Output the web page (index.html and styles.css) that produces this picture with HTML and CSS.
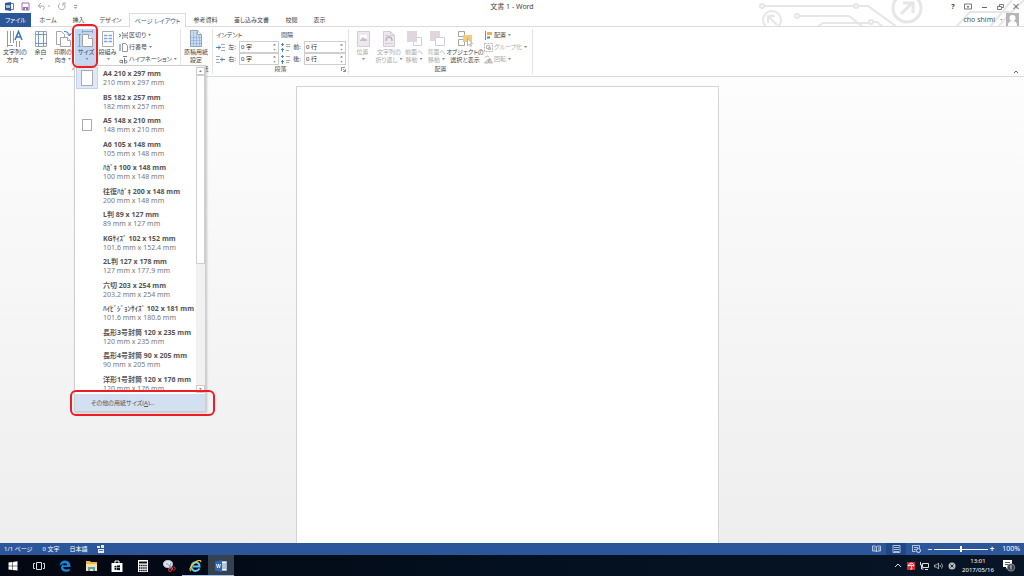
FILE: index.html
```html
<!DOCTYPE html>
<html lang="ja">
<head>
<meta charset="utf-8">
<title>文書 1 - Word</title>
<link rel="stylesheet" href="styles.css">
</head>
<body>
<div class="app">
  <header class="top">
    <svg class="circuit" width="280" height="27" viewBox="0 0 280 27" fill="none" stroke="#e6e6e6" stroke-width="2">
      <circle cx="18" cy="6" r="2"/><path d="M20 6h90"/><circle cx="112" cy="6" r="2"/><path d="M114 6h10l29 21"/>
      <circle cx="53" cy="16" r="2"/><path d="M55 16h50l14 11M73 27l6-4h46"/><circle cx="127" cy="22" r="2"/><path d="M129 22h4l6 5"/>
      <circle cx="28" cy="20" r="9"/><path d="M33 25l-8-8M24 23v-7h7"/>
      <circle cx="163" cy="8" r="14" stroke-width="3"/><path d="M157 14l12-12M159 3h10v10" stroke-width="3"/>
      <path d="M212 27l14-15h42l12-12M246 27l22-27M254 27l20-22"/>
    </svg>
    <div class="titlebar">
      <div class="quick">
        <button aria-label="Word"><svg width="9" height="9" viewBox="0 0 9 9"><path d="M5 1.500h3.500v6H5z" fill="#fff" stroke="#5d80b5"/><path d="M0 1l6-1v9l-6-1z" fill="#2b579a"/><path d="M1 3l1 3 1-3 1 3 1-3" stroke="#fff" fill="none" stroke-width=".7"/></svg></button>
        <button aria-label="保存"><svg width="9" height="9" viewBox="0 0 9 9"><path d="M1 1h7v7H1z" fill="#fff" stroke="#9a6fb8"/><path d="M2 5h5v3H2z" fill="#9a6fb8"/><path d="M4 6h1v2H4z" fill="#fff"/></svg></button>
        <button aria-label="元に戻す"><svg width="13" height="9" viewBox="0 0 13 9" fill="none" stroke="#aaa"><path d="M4 1L1 4l3 2M1 4h5q3 1 0 4"/><path d="M11 4h2"/></svg></button>
        <button aria-label="やり直し"><svg width="9" height="9" viewBox="0 0 9 9" fill="none" stroke="#aaa"><path d="M3 1.500a3.300 3.300 0 1 0 3.500 0M6 4V1h3"/></svg></button>
        <button aria-label="カスタマイズ"><svg width="5" height="6" viewBox="0 0 5 6"><path d="M1 1h3v1H1zM1 3h3L2.500 5z" fill="#999"/></svg></button>
      </div>
      <h1 class="doc-title">文書 1 - Word</h1>
      <div class="window-buttons">
        <button class="help">?</button>
        <button aria-label="リボンの表示"><svg width="8" height="7" viewBox="0 0 8 7" fill="none" stroke="#777"><path d="M.5 1h7v5h-7zM4 5V3M3 3.500h2"/></svg></button>
        <button aria-label="最小化"><svg width="8" height="7" viewBox="0 0 8 7"><path d="M2 4h5v1H2z" fill="#666"/></svg></button>
        <button aria-label="元のサイズ"><svg width="8" height="7" viewBox="0 0 8 7" fill="none" stroke="#777"><path d="M1.500 3.500h4v3h-4zM3.500 3V1.500h4v3H6"/></svg></button>
        <button aria-label="閉じる"><svg width="8" height="7" viewBox="0 0 8 7" stroke="#555"><path d="M1.500 1l5 5M6.500 1l-5 5"/></svg></button>
      </div>
    </div>
    <div class="tab-row">
      <nav class="tabs">
        <button class="tab file">ファイル</button><button class="tab home">ホーム</button><button class="tab insert">挿入</button><button class="tab design">デザイン</button><button class="tab layout">ページ レイアウト</button><button class="tab refs">参考資料</button><button class="tab mail">差し込み文書</button><button class="tab review">校閲</button><button class="tab view">表示</button>
      </nav>
      <button class="account">cho shimi <i class="caret"></i>
        <svg width="13" height="13" viewBox="0 0 13 13"><path d="M0 0h13v13H0z" fill="#b5b5b5"/><circle cx="6.500" cy="5" r="3" fill="#fff"/><path d="M2 13v-2q1-3 4.500-3t4.500 3v2z" fill="#fff"/></svg>
      </button>
    </div>
  </header>

  <section class="ribbon">
    <div class="group setup">
      <div class="group-body">
        <button class="big w30"><svg width="18" height="18" viewBox="0 0 18 18" fill="none" stroke="#9a9a9a"><path d="M1.500 1v16M4.500 1v12M7.500 1v12M10.500 11v6M13.500 11v6M1 15.500h6"/><path d="M9 10l3.500-8.500L16 10M10.500 7h4" stroke="#3a78b8" stroke-width="1.500"/></svg><span>文字列の<br>方向<i class="caret"></i></span></button>
        <button class="big w21"><svg width="14" height="18" viewBox="0 0 14 18" fill="none"><path d="M1.500 1.500h11v15h-11z" stroke="#a5a5a5"/><path d="M1 4.500h12M1 13.500h12M4.500 1v16M9.500 1v16" stroke="#6d9bcb"/></svg><span>余白<br><i class="caret"></i></span></button>
        <button class="big w24"><svg width="17" height="18" viewBox="0 0 17 18" fill="#fff" stroke="#a5a5a5"><path d="M1.500 1.500h5l3 3v10h-8z"/><path d="M5.500 7.500h7l3 3v6h-10z"/><path d="M12.500 7.500v3h3"/><path d="M9 1.500q5 0 5.500 4M12 3.500l2.500 2.500 2-3" stroke="#3a78b8" fill="none"/></svg><span>印刷の<br>向き<i class="caret"></i></span></button>
        <button class="big w22 active"><svg width="16" height="18" viewBox="0 0 16 18" fill="#fff" stroke="#a0a0a0"><path d="M4.500 4.500h6l4 4v8h-10z"/><path d="M10.500 4.500v4h4"/><path d="M4 1.500h11M1.500 4v13M4.500 0v3M14.500 0v3M0 4.500h3M0 16.500h3" stroke="#7897c2" stroke-width=".8"/></svg><span>サイズ<br><i class="caret"></i></span></button>
        <button class="big w21"><svg width="14" height="18" viewBox="0 0 14 18"><path d="M1.500 1.500h11v15h-11z" fill="#fff" stroke="#aaa"/><path d="M3 5.500h3.500M3 8.500h3.500M3 11.500h3.500M7.500 5.500H11M7.500 8.500H11M7.500 11.500H11" stroke="#79a8d8" stroke-width="1.500"/></svg><span>段組み<br><i class="caret"></i></span></button>
        <div class="small-col">
          <button><svg width="9" height="9" viewBox="0 0 9 9" fill="none" stroke="#999"><path d="M3.500 1v2h5V1M3.500 8V6h5v2M3 4.500h6"/><path d="M0 3l2 1.500L0 6" stroke="#3a78b8"/></svg>区切り<i class="caret"></i></button>
          <button><svg width="9" height="9" viewBox="0 0 9 9" fill="none" stroke="#999"><path d="M3.500.5h3l2 2v6h-5z"/><path d="M1 1v7" stroke="#3a78b8"/></svg>行番号<i class="caret"></i></button>
          <button class="hyphen"><svg width="9" height="9" viewBox="0 0 9 9" fill="none" stroke="#777" stroke-width=".9"><circle cx="2" cy="6.500" r="1.300"/><path d="M3.500 5v3.500M5.500 3v5.500"/><circle cx="6.800" cy="6.800" r="1.300"/><path d="M4 1.500h4" stroke="#3a78b8"/></svg>ハイフネーション<i class="caret"></i></button>
        </div>
      </div>
      <div class="group-name">ページ設定</div>
    </div>
    <div class="group manuscript">
      <div class="group-body">
        <button class="big w30"><svg width="16" height="18" viewBox="0 0 16 18"><path d="M2.500.5h7l4 4v12h-11z" fill="#c9dcf0" stroke="#93a5ba"/><path d="M3 7.500h10M3 10.500h10M3 13.500h10M5.500 2v14M8.500 2v14M11.500 5v11" stroke="#8fb0d6" stroke-width=".7"/><path d="M9.500.5v4h4" fill="#fff" stroke="#93a5ba"/></svg><span>原稿用紙<br>設定</span></button>
      </div>
      <div class="group-name">原稿用紙</div>
    </div>
    <div class="group paragraph">
      <div class="group-body fields">
        <fieldset class="indent"><legend>インデント</legend>
          <div class="field"><svg width="9" height="9" viewBox="0 0 9 9" fill="none"><path d="M5 1.500h4M6 4.500h3M5 7.500h4" stroke="#aaa"/><path d="M0 4.500h5M3 2.500v4" stroke="#4a86c4"/></svg><label for="left">左:</label><div class="spin"><input id="left" value="0 字"><span class="arrows"><button aria-label="増やす"></button><button class="down" aria-label="減らす"></button></span></div></div>
          <div class="field"><svg width="9" height="9" viewBox="0 0 9 9" fill="none"><path d="M0 1.500h4M0 4.500h3M0 7.500h4" stroke="#aaa"/><path d="M4 4.500h5M6 2.500v4" stroke="#4a86c4"/></svg><label for="right">右:</label><div class="spin"><input id="right" value="0 字"><span class="arrows"><button aria-label="増やす"></button><button class="down" aria-label="減らす"></button></span></div></div>
        </fieldset>
        <fieldset class="spacing"><legend>間隔</legend>
          <div class="field"><svg width="9" height="9" viewBox="0 0 9 9" fill="none"><path d="M5 1.500h4M5 3.500h4M5 7.500h3" stroke="#aaa"/><path d="M1.500 0v3M0 1.500h3M1.500 5v4M0 6.500h3" stroke="#4a86c4"/></svg><label for="before">前:</label><div class="spin"><input id="before" value="0 行"><span class="arrows"><button aria-label="増やす"></button><button class="down" aria-label="減らす"></button></span></div></div>
          <div class="field"><svg width="9" height="9" viewBox="0 0 9 9" fill="none"><path d="M5 1.500h4M5 5.500h4M5 7.500h3" stroke="#aaa"/><path d="M1.500 0v3M0 1.500h3M1.500 5v4M0 6.500h3" stroke="#4a86c4"/></svg><label for="after">後:</label><div class="spin"><input id="after" value="0 行"><span class="arrows"><button aria-label="増やす"></button><button class="down" aria-label="減らす"></button></span></div></div>
        </fieldset>
      </div>
      <div class="group-name">段落<svg class="launcher" width="5" height="5" viewBox="0 0 5 5" fill="none" stroke="#777"><path d="M.5 4V.5H4M2 2l2.500 2.500M4.500 2v2.500H2" stroke-width=".8"/></svg></div>
    </div>
    <div class="group arrange">
      <div class="group-body">
        <button class="big w27" disabled><svg width="14" height="18" viewBox="0 0 14 18"><path d="M1.500 1.500h12v15h-12z" fill="#eee8ee" stroke="#d4cdd4"/><path d="M4 5h7v6H4z" fill="#fff"/><path d="M4 10l3-3 2 2 1-1 1 2v1H4z" fill="#c4c0c4"/></svg><span>位置<br><i class="caret"></i></span></button>
        <button class="big w26" disabled><svg width="14" height="18" viewBox="0 0 14 18" fill="none"><path d="M1.500 1.500h7l4 4v11h-11z" fill="#eee8ee" stroke="#d4cdd4"/><path d="M8.500 1.500v4h4M3 5.500h4M3 13.500h8" stroke="#d4cdd4"/><path d="M4 11q0-4 3-4t3 4" stroke="#b8b3b8" stroke-width="1.500"/></svg><span>文字列の<br>折り返し<i class="caret"></i></span></button>
        <button class="big w24" disabled><svg width="16" height="18" viewBox="0 0 16 18"><path d="M7.500 7.500h8v8h-8z" fill="#fff" stroke="#d4cdd4"/><path d="M1 1h10v11H1z" fill="#ded7de"/></svg><span>前面へ<br>移動<i class="caret"></i></span></button>
        <button class="big w21" disabled><svg width="16" height="18" viewBox="0 0 16 18"><path d="M1 1h10v10H1z" fill="#ded7de"/><path d="M6.500 7.500h9v8h-9z" fill="#fff" stroke="#d4cdd4"/></svg><span>背面へ<br>移動<i class="caret"></i></span></button>
        <button class="big w36"><svg width="18" height="18" viewBox="0 0 18 18" fill="#fff"><path d="M2.500 1.500h6v5h-6zM2.500 9.500h6v6h-6z" stroke="#a5a5a5"/><path d="M7 5h9v7H7z" fill="#f2cd7c"/><path d="M11.500 8v8l2-2 1 2.500 1-.5-1-2.500h2z" stroke="#999" stroke-width=".7"/></svg><span>オブジェクトの<br>選択と表示</span></button>
        <div class="small-col">
          <button><svg width="9" height="9" viewBox="0 0 9 9"><path d="M1.500 0v9" stroke="#888"/><path d="M3 1h5v3H3z" fill="#e6b457"/><path d="M3 5.500h3v2H3z" fill="#4b82b8"/></svg>配置<i class="caret"></i></button>
          <button disabled class="dim"><svg width="9" height="9" viewBox="0 0 9 9" fill="none" stroke="#b5b5b5"><path d="M.5.5h8v8h-8z" stroke-dasharray="2 1"/><path d="M2.500 2.500h3v3h-3zM4.500 4.500h2v2h-2z"/></svg>グループ化<i class="caret"></i></button>
          <button disabled class="dim"><svg width="9" height="9" viewBox="0 0 9 9" fill="#ddd" stroke="#b5b5b5"><path d="M.5 8h4V4zM5.500 3v5h3z"/><path d="M1 2.500q2-3 4-.5" fill="none"/></svg>回転<i class="caret"></i></button>
        </div>
      </div>
      <div class="group-name">配置</div>
    </div>
    <button class="collapse" aria-label="リボンを折りたたむ"><svg width="6" height="5" viewBox="0 0 6 5" fill="none" stroke="#666"><path d="M1 4l2-2 2 2"/></svg></button>
  </section>

  <main class="workspace"><div class="page"></div></main>

  <footer class="status">
    <span>1/1 ページ</span><span>0 文字</span><span>日本語</span>
    <svg width="8" height="8" viewBox="0 0 8 8"><path d="M0 1h3v2H0zM4 0h3v3H4zM1 4h6v4H1z" fill="#e5ecf6"/><path d="M2 5.500h4" stroke="#2b579a" stroke-width=".8"/></svg>
    <div class="view-tools">
      <button aria-label="閲覧モード"><svg width="9" height="8" viewBox="0 0 9 8" fill="none" stroke="#d5e0ef"><path d="M.5 1h3l1 1 1-1h3v5h-3l-1 1-1-1h-3zM4.500 2v5M1.500 3h2M1.500 5h2M6 3h2M6 5h2" stroke-width=".8"/></svg></button>
      <button class="current" aria-label="印刷レイアウト"><svg width="9" height="8" viewBox="0 0 9 8" fill="none" stroke="#d5e0ef"><path d="M1 .5h7v7H1zM2 2.500h5M2 4.500h5M2 6.500h5" stroke-width=".8"/></svg></button>
      <button aria-label="Web レイアウト"><svg width="9" height="8" viewBox="0 0 9 8" fill="none" stroke="#d5e0ef"><path d="M7.500 3V.5H.5v6h3M2 2.500h4M2 4.500h2" stroke-width=".8"/><circle cx="6.500" cy="5.500" r="2"/></svg></button>
      <button class="zoom-button" aria-label="縮小">−</button>
      <input class="zoom-slider" type="range" min="10" max="190" value="100" aria-label="ズーム">
      <button class="zoom-button" aria-label="拡大">+</button>
      <span class="percent">100%</span>
    </div>
  </footer>

  <div class="taskbar">
    <button aria-label="スタート"><svg width="12" height="12" viewBox="0 0 12 12" fill="#fff"><path d="M1.500 2.500l3.700-.5v3.700H1.500zM5.700 1.900l4.800-.6v4.400H5.700zM1.500 6.200h3.700V10l-3.700-.5zM5.700 6.200h4.800v4.400l-4.800-.6z"/></svg></button>
    <button aria-label="タスク ビュー"><svg width="12" height="12" viewBox="0 0 12 12" fill="none" stroke="#ddd"><path d="M3.500 2.500h5v7h-5zM2 3.500H.5v5H2M10 3.500h1.500v5H10"/></svg></button>
    <button aria-label="Edge"><svg width="12" height="12" viewBox="0 0 12 12"><path d="M.5 6Q1 .5 6.300.5 11.500.7 11.500 7H4.200q.3 2.500 3 2.600 2 0 3.500-.8v2.100Q9 11.800 6.500 11.700 2 11.300 2 7.500 2.200 4.800 4.800 3.500 4.200 4.300 4.200 5.200h4q-.1-2-2.400-2Q2.500 3.200.5 6z" fill="#1683dd"/></svg></button>
    <button aria-label="エクスプローラー"><svg width="13" height="12" viewBox="0 0 13 12"><path d="M1 1h4l1 1h6v9H1z" fill="#e8b84b"/><path d="M1 4h11v7H1z" fill="#ffe394"/><path d="M3 11V7h7v4H8V9H5v2z" fill="#51a5dd"/></svg></button>
    <button aria-label="ストア"><svg width="12" height="12" viewBox="0 0 12 12"><path d="M.5 3h11v9H.5z" fill="#fff"/><path d="M4 4V1h4v3" fill="none" stroke="#fff"/><path d="M3.500 6l2-.3v1.800h-2zM6 5.600l3-.3v2.200H6zM3.500 8h2v2l-2-.3zM6 8h3v2.300L6 10z" fill="#07101d"/></svg></button>
    <button aria-label="電卓"><svg width="12" height="12" viewBox="0 0 12 12"><path d="M1 0h10v12H1z" fill="#fff"/><path d="M2 1.500h8v2H2z" fill="#07101d"/><path d="M2 5.500h8M2 8h8M2 10.500h8" stroke="#07101d" stroke-width="1.300" stroke-dasharray="1.500 .6"/></svg></button>
    <button aria-label="Snipping Tool"><svg width="13" height="12" viewBox="0 0 13 12" fill="none"><ellipse cx="5" cy="4" rx="4.500" ry="3.500" fill="#dce5ee" stroke="#b6c4d1"/><path d="M3 3l7 6M8 3L6 9" stroke="#8798aa"/><circle cx="10.500" cy="8.500" r="1.700" stroke="#d63436"/><circle cx="7" cy="10" r="1.500" stroke="#d63436"/></svg></button>
    <button class="running" aria-label="Internet Explorer"><svg width="13" height="12" viewBox="0 0 13 12" fill="none"><path d="M10.500 8.500Q9 11 6.500 11 2.500 10.500 2.500 6.500 3 2.500 6.500 2.300 10.500 2.500 10.500 6.600H4" stroke="#5fcaf3" stroke-width="2"/><path d="M2 11Q-1 9 5 3.500T12 2" stroke="#f0c53c" stroke-width="1.200"/></svg></button>
    <button class="running focused" aria-label="Word"><svg width="12" height="12" viewBox="0 0 12 12"><path d="M6 1.500h5.500v9H6z" fill="#fff" stroke="#9db6d8"/><path d="M7 4h4M7 6h4M7 8h4" stroke="#2b579a" stroke-width=".7"/><path d="M0 1.500L7 0v12L0 10.500z" fill="#2b67b5"/><path d="M1.500 4l1 4 1-4 1 4 1-4" stroke="#fff" fill="none" stroke-width=".8"/></svg></button>
    <div class="tray">
      <svg width="8" height="8" viewBox="0 0 8 8" fill="none" stroke="#ddd"><path d="M1 5l3-3 3 3"/></svg>
      <svg width="8" height="8" viewBox="0 0 8 8"><path d="M0 0h8v8H0z" fill="#e32229"/><path d="M1 4q1-3 4-3 2 1 2 3L4 3zM4 3l1 4H3" fill="none" stroke="#fff" stroke-width=".9"/></svg>
      <svg width="9" height="8" viewBox="0 0 9 8" fill="none" stroke="#ddd"><path d="M2.500 1.500h6v4h-6zM5 7.500h3M.5 0v3h2M1.500 3v4h2"/></svg>
      <svg width="9" height="8" viewBox="0 0 9 8" fill="none" stroke="#ccc"><path d="M.5 3h2l2-2v6l-2-2h-2zM6 3q1 1 0 2M7.500 1.500q2 2.500 0 5" stroke-width=".8"/></svg>
      <svg width="8" height="8" viewBox="0 0 8 8"><circle cx="4" cy="4" r="3.500" fill="#bbb"/><path d="M2.500 2.500l3 3M5.500 2.500l-3 3" stroke="#222"/></svg>
      <time class="clock">13:01<br>2017/05/16</time>
      <svg class="notice" width="14" height="13" viewBox="0 0 14 13"><path d="M1 1h9v7H6l-2 2V8H1z" fill="#fff"/><path d="M3 3.500h5M3 5.500h5" stroke="#333" stroke-width=".8"/><circle cx="9" cy="8.500" r="3.700" fill="#3b4047" stroke="#aaa" stroke-width=".7"/><path d="M8 7.500l1-1v4" fill="none" stroke="#fff" stroke-width=".8"/></svg>
    </div>
  </div>

  <div class="size-menu">
    <div class="menu-view">
      <ul class="sizes">
        <li class="selected"><i class="thumb a4"></i><button><b>A4 210 x 297 mm</b><span>210 mm x 297 mm</span></button></li>
        <li><i class="thumb"></i><button><b>B5 182 x 257 mm</b><span>182 mm x 257 mm</span></button></li>
        <li><i class="thumb a5"></i><button><b>A5 148 x 210 mm</b><span>148 mm x 210 mm</span></button></li>
        <li><i class="thumb"></i><button><b>A6 105 x 148 mm</b><span>105 mm x 148 mm</span></button></li>
        <li><i class="thumb"></i><button><b>ﾊｶﾞｷ 100 x 148 mm</b><span>100 mm x 148 mm</span></button></li>
        <li><i class="thumb"></i><button><b>往復ﾊｶﾞｷ 200 x 148 mm</b><span>200 mm x 148 mm</span></button></li>
        <li><i class="thumb"></i><button><b>L判 89 x 127 mm</b><span>89 mm x 127 mm</span></button></li>
        <li><i class="thumb"></i><button><b>KGｻｲｽﾞ 102 x 152 mm</b><span>101.6 mm x 152.4 mm</span></button></li>
        <li><i class="thumb"></i><button><b>2L判 127 x 178 mm</b><span>127 mm x 177.9 mm</span></button></li>
        <li><i class="thumb"></i><button><b>六切 203 x 254 mm</b><span>203.2 mm x 254 mm</span></button></li>
        <li><i class="thumb"></i><button><b>ﾊｲﾋﾞｼﾞｮﾝｻｲｽﾞ 102 x 181 mm</b><span>101.6 mm x 180.6 mm</span></button></li>
        <li><i class="thumb"></i><button><b>長形3号封筒 120 x 235 mm</b><span>120 mm x 235 mm</span></button></li>
        <li><i class="thumb"></i><button><b>長形4号封筒 90 x 205 mm</b><span>90 mm x 205 mm</span></button></li>
        <li><i class="thumb"></i><button><b>洋形1号封筒 120 x 176 mm</b><span>120 mm x 176 mm</span></button></li>
      </ul>
      <div class="scrollbar"><button aria-label="上へ"><i class="caret up"></i></button><div class="scroll-thumb"></div><button class="scroll-down" aria-label="下へ"><i class="caret"></i></button></div>
    </div>
    <button class="more">その他の用紙サイズ(<u>A</u>)...</button>
  </div>
  <div class="mark mark-size"></div>
  <div class="mark mark-more"></div>
</div>
</body>
</html>
```
FILE: styles.css
```css
* { box-sizing: border-box; }
body {
  margin: 0;
  font: 7px/8px "Noto Sans", "Noto Sans CJK JP", sans-serif;
  font-feature-settings: "palt";
  color: #444;
  background: #fff;
}
button, input { font: inherit; color: inherit; font-feature-settings: inherit; }
button { border: 0; padding: 0; background: none; white-space: nowrap; }
svg { display: block; flex: none; }
.app { position: relative; display: flex; flex-direction: column; height: 100vh; min-height: 500px; overflow: hidden; }
.caret { display: inline-block; width: 3px; height: 2px; margin-left: 2px; vertical-align: 2px; background: #888; clip-path: polygon(0 0, 100% 0, 50% 100%); }
.caret.up { clip-path: polygon(50% 0, 100% 100%, 0 100%); }

.top { position: relative; }
.circuit { position: absolute; right: 0; top: 0; }
.titlebar, .tab-row { position: relative; display: flex; justify-content: space-between; height: 13px; align-items: center; }
.quick { display: flex; align-items: center; gap: 7px; padding-left: 5px; width: 160px; }
.doc-title { margin: 0; font-size: 7px; font-weight: 400; }
.window-buttons { display: flex; align-items: center; justify-content: flex-end; gap: 8px; width: 160px; padding-right: 4px; }
.help { font-weight: 700; width: 8px; }
.window-buttons .help { margin-right: -1px; }
.tab-row { height: 14px; border-bottom: 1px solid #dcdcdc; align-items: stretch; }
.tabs { display: flex; }
.tab { font-size: 6px; height: 14px; }
.file { width: 31px; background: #2b579a; color: #fff; }
.home { width: 34px; }
.insert { width: 27px; }
.design { width: 37px; }
.layout { width: 57px; border: 1px solid #dcdcdc; border-bottom: 0; background: #fff; color: #2b579a; }
.refs { width: 39px; }
.mail { width: 53px; }
.review { width: 27px; }
.view { width: 29px; }
.account { display: flex; align-items: center; gap: 3px; padding-right: 5px; color: #555; }

.ribbon { display: flex; height: 50px; border-bottom: 1px solid #dcdcdc; background: #fff; font-size: 6px; }
.group { display: flex; flex-direction: column; border-right: 1px solid #e4e4e4; margin: 2px 0; }
.setup { width: 181px; }
.manuscript { width: 32px; }
.paragraph { width: 136px; }
.arrange { width: 184px; }
.group-body { display: flex; flex: 1; align-items: stretch; }
.group-name { position: relative; height: 9px; line-height: 9px; text-align: center; color: #555; }
.setup .group-name { padding-right: 7px; }
.launcher { position: absolute; right: 2px; top: 2px; }
.big { display: flex; flex-direction: column; align-items: center; line-height: 8px; padding-top: 1px; flex: none; }
.big span { display: block; }
.big:disabled, .dim { color: #a9a9a9; }
.active { background: #c3d6f2; }
.w21 { width: 21px; }
.w22 { width: 22px; }
.w24 { width: 24px; }
.w26 { width: 26px; }
.w27 { width: 27px; }
.w30 { width: 30px; }
.w36 { width: 36px; }
.small-col { display: flex; flex-direction: column; padding-left: 1px; }
.small-col button { display: flex; align-items: center; gap: 1px; height: 12px; }
.small-col .caret { margin-left: 1px; }
.fields { gap: 2px; padding-left: 3px; }
fieldset { border: 0; margin: 0; padding: 0; min-width: 0; }
.spacing { width: 65px; }
.indent { width: 63px; }
legend { padding: 0; height: 12px; line-height: 12px; }
.field { display: flex; align-items: center; height: 12px; gap: 1px; }
.field label { width: 12px; text-align: center; }
.spin { display: flex; flex: 1; height: 12px; border: 1px solid #cfcfcf; min-width: 0; }
.spin input { flex: 1; min-width: 0; width: 20px; border: 0; padding: 0 1px; background: none; outline: 0; color: #222; }
.arrows { display: flex; flex-direction: column; justify-content: space-around; padding-right: 2px; }
.arrows button { width: 3px; height: 2px; background: #888; clip-path: polygon(50% 0, 100% 100%, 0 100%); }
.arrows .down { clip-path: polygon(0 0, 100% 0, 50% 100%); }
.collapse { margin: auto 5px 2px auto; }

.workspace { flex: 1; display: flex; justify-content: center; padding: 9px 9px 0 0; background: linear-gradient(#fdfdfd, #eee); }
.page { width: 423px; background: #fff; border: 1px solid #d4d4d4; border-bottom: 0; }

.status { display: flex; align-items: center; gap: 10px; height: 12px; padding: 0 4px; background: #2b579a; color: #fff; font-size: 6px; }
.view-tools { display: flex; align-items: center; margin-left: auto; }
.view-tools button { width: 20px; height: 12px; display: flex; align-items: center; justify-content: center; }
.view-tools .current { background: #1f4788; }
.view-tools .zoom-button { width: 8px; font-size: 8px; font-weight: 700; }
.zoom-slider { appearance: none; width: 54px; height: 8px; margin: 0; background: linear-gradient(#fff, #fff) center / 100% 1px no-repeat; }
.zoom-slider::-webkit-slider-thumb { appearance: none; width: 2px; height: 6px; background: #fff; }
.percent { font-size: 7px; padding-left: 6px; }

.taskbar { display: flex; height: 21px; background: linear-gradient(90deg, #030711, #03101f 50%, #071526); color: #fff; }
.taskbar button { display: flex; align-items: center; justify-content: center; width: 26px; border-bottom: 1px solid transparent; border-top: 1px solid transparent; }
.taskbar .running { border-bottom-color: #9bc4e8; }
.taskbar .focused { background: #354150; border-top-color: #354150; }
.tray { display: flex; align-items: center; gap: 5px; margin-left: auto; padding-right: 8px; }
.clock { font-size: 6px; line-height: 9px; text-align: center; width: 34px; }
.notice { margin-left: 2px; }

.size-menu { position: absolute; left: 74px; top: 65px; width: 132px; background: #fff; border: 1px solid #cfcfcf; box-shadow: 1px 1px 2px #0003; }
.menu-view { display: flex; height: 327px; overflow: hidden; }
.sizes { flex: 1; display: grid; grid-auto-rows: 1fr; height: 329px; margin: 0; padding: 0; list-style: none; }
.sizes li { display: flex; align-items: flex-start; }
.thumb { display: flex; align-items: center; justify-content: center; width: 22px; height: 22px; margin: 1px 5px 0 1px; }
.thumb::before { content: ""; border: 1px solid transparent; }
.selected .thumb { background: #dde8f8; border: 1px solid #c3d4ee; }
.a4::before { width: 10px; height: 14px; border-color: #aaa; background: #fff; }
.a5::before { width: 8px; height: 10px; border-color: #aaa; }
.sizes button { text-align: left; padding-top: 3px; line-height: 9px; color: #777; }
.sizes b { display: block; color: #555; }
.sizes span { display: block; }
.scrollbar { display: flex; flex-direction: column; width: 9px; padding-top: 1px; background: #f1f1f1; }
.scrollbar button { display: flex; align-items: center; justify-content: center; height: 8px; border: 1px solid #ccc; background: #fff; }
.scrollbar .caret { margin: 0; }
.scroll-thumb { height: 189px; border: 1px solid #cfcfcf; background: #fff; }
.scrollbar .scroll-down { margin-top: auto; }
.more { display: block; width: 100%; height: 17px; margin-top: 1px; padding-left: 16px; font-size: 6px; text-align: left; background: #d3e0f2; color: #555; }
.mark { position: absolute; border: 2px solid #ee1c25; border-radius: 6px; pointer-events: none; }
.mark-size { left: 72px; top: 24px; width: 26px; height: 44px; }
.mark-more { left: 70px; top: 390px; width: 145px; height: 26px; }
```
